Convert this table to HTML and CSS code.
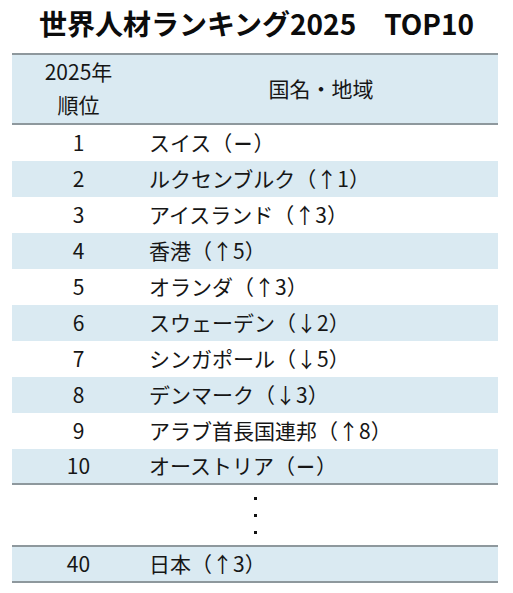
FILE: index.html
```html
<!DOCTYPE html>
<html lang="ja">
<head>
<meta charset="utf-8">
<link rel="stylesheet" href="styles.css">
</head>
<body>
<div class="page">
  <h1 class="title">世界人材ランキング2025　TOP10</h1>
  <div class="rank">
    <div class="row head blue">
      <div class="c1"><div>2025年</div><div>順位</div></div>
      <div class="c2 center">国名・地域</div>
    </div>
    <div class="row"><div class="c1">1</div><div class="c2">スイス（<span class="dash">－</span>）</div></div>
    <div class="row blue"><div class="c1">2</div><div class="c2">ルクセンブルク（↑1）</div></div>
    <div class="row"><div class="c1">3</div><div class="c2">アイスランド（↑3）</div></div>
    <div class="row blue"><div class="c1">4</div><div class="c2">香港（↑5）</div></div>
    <div class="row"><div class="c1">5</div><div class="c2">オランダ（↑3）</div></div>
    <div class="row blue"><div class="c1">6</div><div class="c2">スウェーデン（↓2）</div></div>
    <div class="row"><div class="c1">7</div><div class="c2">シンガポール（↓5）</div></div>
    <div class="row blue"><div class="c1">8</div><div class="c2">デンマーク（↓3）</div></div>
    <div class="row"><div class="c1">9</div><div class="c2">アラブ首長国連邦（↑8）</div></div>
    <div class="row blue ruled"><div class="c1">10</div><div class="c2">オーストリア（<span class="dash">－</span>）</div></div>
    <div class="gap ruled"><div class="dots"><span></span><span></span><span></span></div></div>
    <div class="row blue ruled"><div class="c1">40</div><div class="c2">日本（↑3）</div></div>
  </div>
</div>
</body>
</html>
```

FILE: styles.css
```css
* {
  box-sizing: border-box;
}
html, body {
  margin: 0;
  padding: 0;
  background: #ffffff;
}
body {
  font-family: "Noto Sans CJK JP", "Noto Sans", sans-serif;
  color: #161616;
}
.page {
  width: 513px;
  height: 593px;
}
.title {
  margin: 0;
  height: 53px;
  line-height: 46px;
  font-size: 28px;
  font-weight: 700;
  text-align: center;
  color: #0c0c0c;
}
.rank {
  margin-left: 12px;
  width: 486px;
  font-size: 21px;
  border-top: 2px solid #8e989d;
}
.row {
  display: grid;
  grid-template-columns: 132px 1fr;
  align-items: center;
  height: 36px;
  line-height: 28px;
  padding-bottom: 3px;
}
.c1 {
  text-align: center;
  padding-left: 1px;
}
.c2 {
  padding-left: 5px;
}
.c2.center {
  text-align: center;
  padding-left: 0;
}
.head {
  height: 70px;
  line-height: 33px;
  font-size: 21px;
  padding-bottom: 2px;
  border-bottom: 2px solid #8e989d;
}
.blue {
  background: #daeaf2;
}
.ruled {
  border-bottom: 2px solid #8e989d;
}
.dash {
  font-weight: 700;
}
.gap {
  height: 62px;
  display: flex;
  align-items: center;
  justify-content: center;
}
.dots {
  display: flex;
  flex-direction: column;
  align-items: center;
  gap: 14px;
}
.dots span {
  display: block;
  width: 3px;
  height: 3px;
  background: #111;
}
```
